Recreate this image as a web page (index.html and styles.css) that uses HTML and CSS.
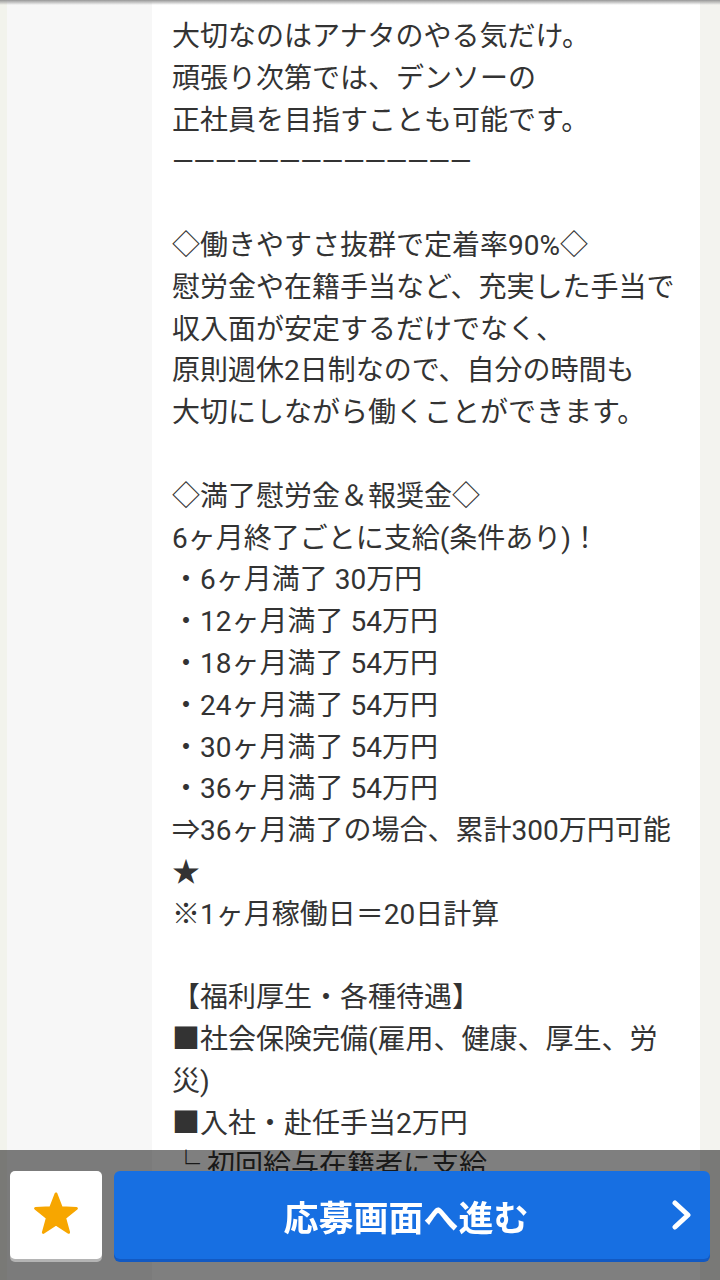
FILE: index.html
```html
<!DOCTYPE html>
<html lang="ja">
    <head>
        <meta charset="UTF-8">
        <meta name="viewport" content="width=device-width, initial-scale=1.0">
        <title>求人詳細</title>
        <link rel="stylesheet" href="styles.css">
    </head>
    <body>
        <div class="top-shadow"></div>
        <div class="page">
            <div class="side"></div>
            <div class="detail">
                <p class="detail-text">
                    大切なのはアナタのやる気だけ。<br>
                    頑張り次第では、デンソーの<br>
                    正社員を目指すことも可能です。<br>
                    <span class="rule">——————————————</span><br>
                    <br>
                    ◇働きやすさ抜群で定着率90%◇<br>
                    慰労金や在籍手当など、充実した手当で<br>
                    収入面が安定するだけでなく、<br>
                    原則週休2日制なので、自分の時間も<br>
                    大切にしながら働くことができます。<br>
                    <br>
                    ◇満了慰労金＆報奨金◇<br>
                    6ヶ月終了ごとに支給(条件あり)！<br>
                    ・6ヶ月満了 30万円<br>
                    ・12ヶ月満了 54万円<br>
                    ・18ヶ月満了 54万円<br>
                    ・24ヶ月満了 54万円<br>
                    ・30ヶ月満了 54万円<br>
                    ・36ヶ月満了 54万円<br>
                    ⇒36ヶ月満了の場合、累計300万円可能★<br>
                    ※1ヶ月稼働日＝20日計算<br>
                    <br>
                    【福利厚生・各種待遇】<br>
                    ■社会保険完備(雇用、健康、厚生、労災)<br>
                    ■入社・赴任手当2万円<br>
                    └ 初回給与在籍者に支給<br>
                    ■赴任旅費支給<br>
                    └ 入社時に一括支給
                </p>
            </div>
            <div class="rail"></div>
        </div>

        <div class="action-bar">
            <button class="fav-btn" aria-label="お気に入り">
                <svg width="48" height="48" viewBox="0 0 48 48">
                    <polygon points="24,3 29.3,16.7 44.4,17.4 32.6,26.8 36.6,41.3 24,33 11.4,41.3 15.4,26.8 3.6,17.4 18.7,16.7" fill="#f7a600" stroke="#f7a600" stroke-width="3" stroke-linejoin="round"/>
                </svg>
            </button>
            <button class="apply-btn">
                <span class="apply-label">応募画面へ進む</span>
                <svg class="chevron" width="20" height="30" viewBox="0 0 20 30">
                    <polyline points="3,3 16,15 3,27" fill="none" stroke="#fff" stroke-width="5" stroke-linecap="round" stroke-linejoin="round"/>
                </svg>
            </button>
        </div>
    </body>
</html>
```

FILE: styles.css
```css
* {
    box-sizing: border-box;
}

body {
    margin: 0;
    background-color: #f7f7f7;
    font-family: Roboto, "Noto Sans CJK JP", sans-serif;
    color: #333333;
}

.top-shadow {
    position: fixed;
    top: 0;
    left: 0;
    right: 0;
    height: 5px;
    background: linear-gradient(#979797, rgba(151, 151, 151, 0));
    z-index: 5;
}

.page {
    display: flex;
    min-height: 100vh;
    border-left: 7px solid #f2f3ec;
}

.side {
    width: 145px;
}

.detail {
    width: 548px;
    background-color: #ffffff;
    padding: 16px 20px 0;
}

.rail {
    flex: 1;
    background-color: #f3f3ef;
}

.detail-text {
    margin: 0;
    font-size: 28px;
    line-height: 41.8px;
}

.rule {
    letter-spacing: -0.5px;
}

.action-bar {
    position: fixed;
    left: 0;
    right: 0;
    bottom: 0;
    height: 130px;
    padding: 21px 10px 0;
    display: flex;
    align-items: flex-start;
    gap: 12px;
    background-color: rgba(0, 0, 0, 0.5);
    z-index: 10;
}

.fav-btn {
    width: 92px;
    height: 88px;
    border: none;
    border-radius: 5px;
    background-color: #ffffff;
    box-shadow: 0 3px 0 #b4b4b4;
    display: flex;
    align-items: center;
    justify-content: center;
    padding: 0;
}

.apply-btn {
    flex: 1;
    height: 88px;
    border: none;
    border-radius: 6px;
    background-color: #176fe2;
    box-shadow: 0 3px 0 #1259c2;
    display: flex;
    align-items: center;
    padding: 0 18px 0 26px;
    color: #ffffff;
}

.apply-label {
    flex: 1;
    text-align: center;
    font-family: "Noto Sans CJK JP", sans-serif;
    font-weight: 700;
    font-size: 35px;
    letter-spacing: 0;
}

.chevron {
    display: block;
}
```
